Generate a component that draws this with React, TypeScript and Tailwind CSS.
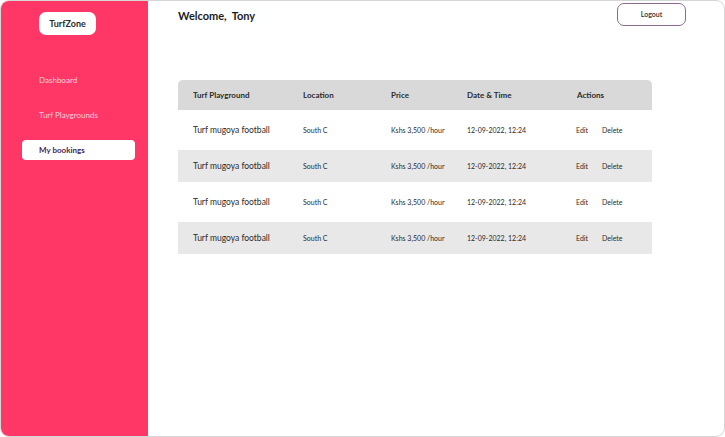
import React from "react";

const rows = [
  { name: "Turf mugoya football", location: "South C", price: "Kshs 3,500 /hour", date: "12-09-2022, 12:24" },
  { name: "Turf mugoya football", location: "South C", price: "Kshs 3,500 /hour", date: "12-09-2022, 12:24" },
  { name: "Turf mugoya football", location: "South C", price: "Kshs 3,500 /hour", date: "12-09-2022, 12:24" },
  { name: "Turf mugoya football", location: "South C", price: "Kshs 3,500 /hour", date: "12-09-2022, 12:24" },
];

const Sidebar = () => (
  <aside className="w-[147px] shrink-0 bg-[#ff3767] flex flex-col">
    <div className="pl-[38px] pt-[11px]">
      <div className="w-[57px] h-[23px] bg-white rounded-[7px] flex items-center justify-center text-[9px] font-bold text-[#2b2b2b]">
        TurfZone
      </div>
    </div>
    <nav className="flex flex-col mt-[35px] pl-[21px] gap-[15px]">
      <a className="w-[113px] h-[20px] flex items-center pl-[17px] text-[8px] text-[#ffd0dc]">Dashboard</a>
      <a className="w-[113px] h-[20px] flex items-center pl-[17px] text-[8px] text-[#ffd0dc]">Turf Playgrounds</a>
      <a className="w-[113px] h-[20px] flex items-center pl-[17px] text-[8px] font-bold text-[#4a1d4f] bg-white rounded-[4px]">
        My bookings
      </a>
    </nav>
  </aside>
);

export default function App() {
  return (
    <div
      className="w-[725px] h-[437px] border border-[#d6d6d6] rounded-[9px] overflow-hidden flex bg-white"
      style={{ fontFamily: "Lato, 'Open Sans', sans-serif" }}
    >
      <Sidebar />
      <main className="flex-1 flex flex-col pl-[30px] pr-[37px]">
        <div className="flex justify-between items-start pt-[2px]">
          <h1 className="mt-[5px] text-[11px] font-bold text-[#1c1c1c]">Welcome,&nbsp; Tony</h1>
          <button className="w-[69px] h-[23px] border border-[#8a6a8e] rounded-[7px] text-[7px] font-semibold text-[#2b2b2b] mr-[1px]">
            Logout
          </button>
        </div>
        <div className="mt-[54px] w-[474px] text-[#2b2b2b]">
          <div className="h-[30px] bg-[#d9d9d9] rounded-t-[5px] flex items-center text-[8px] font-bold">
            <div className="w-[125px] pl-[15px]">Turf Playground</div>
            <div className="w-[88px]">Location</div>
            <div className="w-[76px]">Price</div>
            <div className="w-[110px]">Date &amp; Time</div>
            <div>Actions</div>
          </div>
          {rows.map((r, i) => (
            <div
              key={i}
              className={
                i % 2 === 0
                  ? "h-[40px] bg-white flex items-center text-[7px]"
                  : "h-[32px] bg-[#e8e8e8] flex items-center text-[7px]"
              }
            >
              <div className="w-[125px] pl-[15px] text-[8.5px]">{r.name}</div>
              <div className="w-[88px]">{r.location}</div>
              <div className="w-[76px]">{r.price}</div>
              <div className="w-[109px]">{r.date}</div>
              <div className="flex gap-[14px]">
                <span>Edit</span>
                <span>Delete</span>
              </div>
            </div>
          ))}
        </div>
      </main>
    </div>
  );
}
